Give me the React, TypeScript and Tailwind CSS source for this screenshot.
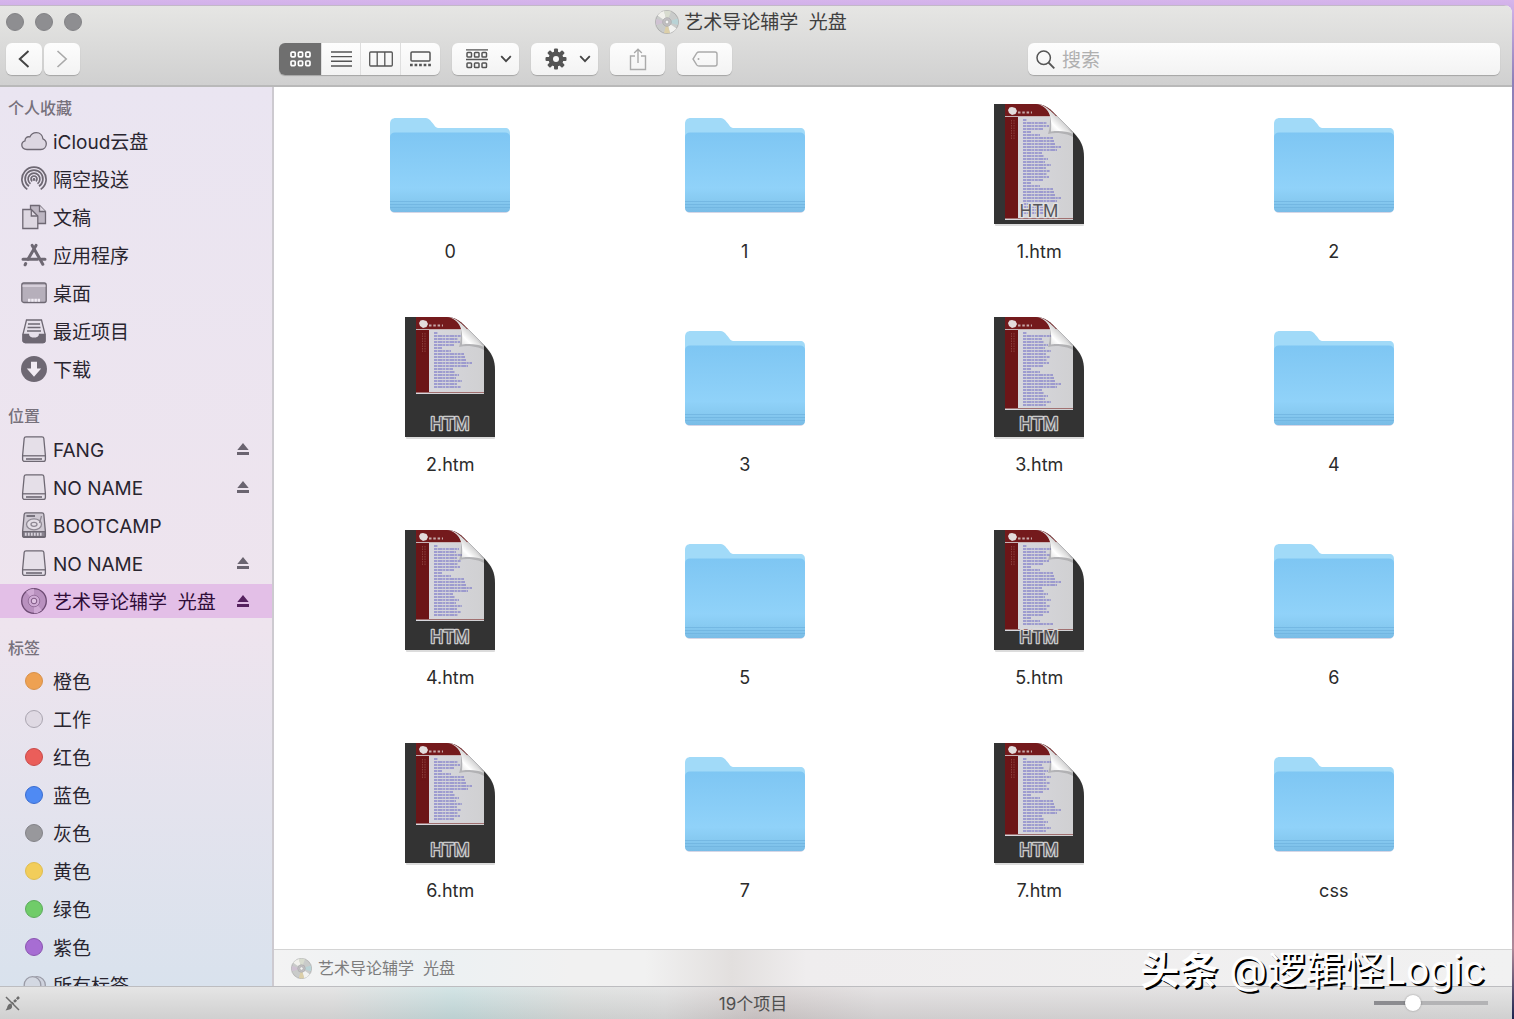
import { useState } from "react";
import type { ReactNode } from "react";
import clsx from "clsx";

type SidebarItem = { label: string; icon: ReactNode; eject?: boolean; selected?: boolean };
type FileItem = { name: string; kind: "folder" | "htm"; page?: number };

const VOLUME = "艺术导论辅学  光盘";

const files: FileItem[] = [
  { name: "0", kind: "folder" },
  { name: "1", kind: "folder" },
  { name: "1.htm", kind: "htm", page: 116 },
  { name: "2", kind: "folder" },
  { name: "2.htm", kind: "htm", page: 77 },
  { name: "3", kind: "folder" },
  { name: "3.htm", kind: "htm", page: 93 },
  { name: "4", kind: "folder" },
  { name: "4.htm", kind: "htm", page: 91 },
  { name: "5", kind: "folder" },
  { name: "5.htm", kind: "htm", page: 101 },
  { name: "6", kind: "folder" },
  { name: "6.htm", kind: "htm", page: 82 },
  { name: "7", kind: "folder" },
  { name: "7.htm", kind: "htm", page: 93 },
  { name: "css", kind: "folder" },
];

const iconProps = {
  width: 26,
  height: 26,
  viewBox: "0 0 26 26",
  fill: "none",
  stroke: "#6e6873",
  strokeWidth: 1.3,
  "aria-hidden": true,
} as const;

function CloudIcon() {
  return (
    <svg {...iconProps}>
      <path
        d="M6 21.500C2.800 21.500.8 19.600.8 17c0-2.200 1.300-3.700 3.200-4.200-.1-2.600 2.200-4.700 4.800-3.800C9.900 6.500 12.300 4.600 15.300 4.600c3.700 0 6.300 2.600 6.600 6.200 2.100.8 3.400 2.600 3.400 5 0 3.200-2.300 5.700-5.500 5.700z"
        fill="#dcd6e1"
      />
    </svg>
  );
}

function AirDropIcon() {
  return (
    <svg {...iconProps} strokeWidth={1.7}>
      <path d="M6.300 23.400A12.100 12.100 0 1 1 19.700 23.400" />
      <path d="M8 20.300A8.900 8.900 0 1 1 18 20.300" />
      <path d="M9.500 17.800A5.900 5.900 0 1 1 16.500 17.800" />
      <path d="M11.200 15.400A3 3 0 1 1 14.800 15.400" />
      <circle cx="13" cy="13.500" r="1.400" fill="#6e6873" stroke="none" />
    </svg>
  );
}

function DocumentsIcon() {
  return (
    <svg {...iconProps}>
      <path d="M9.500 1.500h9l6 6V19.500h-15z" fill="#bdb6c2" />
      <path d="M18.500 1.500v6h6" fill="#ddd7e1" />
      <path d="M1.800 5.500h8.500l6.500 6.500v12.500h-15z" fill="#ddd7e1" />
      <path d="M10.300 5.500v6.500h6.500" />
    </svg>
  );
}

function AppsIcon() {
  return (
    <svg {...iconProps} strokeLinecap="round" strokeWidth={3}>
      <path d="M11.200 3.400 21.800 22.300M15 3.400 7 17.300M4.700 21.500l-.6 1.300" />
      <path d="M2 17.300h14.500M20.500 17.300H24" />
    </svg>
  );
}

function DesktopIcon() {
  return (
    <svg {...iconProps}>
      <rect x=".8" y="3" width="24.400" height="19.500" rx="2" fill="#b6afbb" />
      <path d="M1.500 6h23" stroke="#e0dae4" strokeWidth="1.500" />
      <path d="M7 20.300h12" stroke="#f1ecf4" strokeWidth="3" strokeDasharray="2.500 .7" />
    </svg>
  );
}

function RecentsIcon() {
  return (
    <svg {...iconProps}>
      <path d="M5.500 2h15l3.500 14v6.500a2 2 0 0 1-2 2H4a2 2 0 0 1-2-2V16z" fill="#e6e0ea" />
      <path d="M2 16.500h5.500c.5 5 10.500 5 11 0H24v6a2 2 0 0 1-2 2H4a2 2 0 0 1-2-2z" fill="#6e6873" />
      <path d="M7 6h12M6.500 9.500h13M6 13h14" />
    </svg>
  );
}

function DownloadsIcon() {
  return (
    <svg {...iconProps} stroke="none">
      <circle cx="13" cy="13" r="13" fill="#6e6873" />
      <path d="M10 5.800h6v6.700h4.200L13 20.700l-7.200-8.200H10z" fill="#f1ebf3" />
    </svg>
  );
}

function DriveIcon() {
  return (
    <svg {...iconProps}>
      <path
        d="M5 .8h16c1 0 1.700.6 1.800 1.500L24.400 19.500v4a2 2 0 0 1-2 2H3.600a2 2 0 0 1-2-2v-4L3.200 2.300C3.300 1.400 4 .8 5 .8z"
        fill="#e5dfe8"
      />
      <path d="M1.800 19.800h22.400" />
      <path d="M5 23h16" strokeWidth="1.600" />
    </svg>
  );
}

function HardDiskIcon() {
  return (
    <svg {...iconProps}>
      <path
        d="M5 .8h16c1 0 1.700.6 1.800 1.500L24.400 19.500v4a2 2 0 0 1-2 2H3.600a2 2 0 0 1-2-2v-4L3.200 2.300C3.300 1.400 4 .8 5 .8z"
        fill="#cfc9d3"
      />
      <path d="M2 19.600h22.200v5H2z" fill="#8a8490" />
      <path d="M4 22.200h18" stroke="#d8d2dc" strokeWidth="3" strokeDasharray="1.600 1.400" />
      <path d="M5.500 4h8.500" strokeWidth="1.800" />
      <ellipse cx="13" cy="12.300" rx="7.500" ry="5.500" stroke="#8e8893" fill="#e3dee6" />
      <ellipse cx="13" cy="12.300" rx="3" ry="2" stroke="#8e8893" />
      <path d="m20.500 4-2 7" stroke="#8e8893" />
    </svg>
  );
}

function SideDiscIcon() {
  return (
    <svg {...iconProps} stroke="#6c4a72">
      <circle cx="13" cy="13" r="12.300" fill="#b991bf" />
      <path d="M13 13 5 3.800A12 12 0 0 1 13 .8zM13 13l8 9.200a12 12 0 0 1-8 3z" fill="#cfa9d4" stroke="none" />
      <circle cx="13" cy="13" r="5.800" fill="#d0acd5" stroke="#916b97" strokeWidth=".9" />
      <circle cx="13" cy="13" r="2.800" fill="#dfc2e2" stroke="#7d5783" strokeWidth="1" />
    </svg>
  );
}

function TagDot({ className }: { className: string }) {
  return <span className={clsx("mx-1 block size-[18px] rounded-full border", className)} />;
}

function AllTagsIcon() {
  return (
    <svg {...iconProps} stroke="#9a9ba6">
      <circle cx="16" cy="13" r="8.300" fill="#cfd3de" />
      <circle cx="11.500" cy="13" r="8.300" fill="#d3d8e2" />
    </svg>
  );
}

const sections: { title: string; items: SidebarItem[] }[] = [
  {
    title: "个人收藏",
    items: [
      { label: "iCloud云盘", icon: <CloudIcon /> },
      { label: "隔空投送", icon: <AirDropIcon /> },
      { label: "文稿", icon: <DocumentsIcon /> },
      { label: "应用程序", icon: <AppsIcon /> },
      { label: "桌面", icon: <DesktopIcon /> },
      { label: "最近项目", icon: <RecentsIcon /> },
      { label: "下载", icon: <DownloadsIcon /> },
    ],
  },
  {
    title: "位置",
    items: [
      { label: "FANG", icon: <DriveIcon />, eject: true },
      { label: "NO NAME", icon: <DriveIcon />, eject: true },
      { label: "BOOTCAMP", icon: <HardDiskIcon /> },
      { label: "NO NAME", icon: <DriveIcon />, eject: true },
      { label: VOLUME, icon: <SideDiscIcon />, eject: true, selected: true },
    ],
  },
  {
    title: "标签",
    items: [
      { label: "橙色", icon: <TagDot className="border-[#d8914a] bg-[#eea152]" /> },
      { label: "工作", icon: <TagDot className="border-[#aaa5b0] bg-[#dfd9e3]" /> },
      { label: "红色", icon: <TagDot className="border-[#c94a4a] bg-[#ea5e5a]" /> },
      { label: "蓝色", icon: <TagDot className="border-[#3a6cd0] bg-[#4f8af3]" /> },
      { label: "灰色", icon: <TagDot className="border-[#838388] bg-[#98989c]" /> },
      { label: "黄色", icon: <TagDot className="border-[#dfbd50] bg-[#f2cd5a]" /> },
      { label: "绿色", icon: <TagDot className="border-[#5cab5c] bg-[#70cc69]" /> },
      { label: "紫色", icon: <TagDot className="border-[#8a55b0] bg-[#a76dd3]" /> },
      { label: "所有标签", icon: <AllTagsIcon /> },
    ],
  },
];

function DiscIcon({ size }: { size: number }) {
  return (
    <svg width={size} height={size} viewBox="0 0 24 24" aria-hidden="true">
      <circle cx="12" cy="12" r="11.500" fill="#c9cbca" stroke="#a5a5a5" strokeWidth=".8" />
      <path d="M12 12 2.500 5.500A11.300 11.300 0 0 1 9 1.100z" fill="#f1f1ec" />
      <path d="M12 12 9 1.100A11.300 11.300 0 0 1 16 1.400z" fill="#d8dccf" />
      <path d="M12 12 22.600 8.500A11.300 11.300 0 0 1 22.800 15z" fill="#b9d3d6" />
      <path d="m12 12 9.500 6.500a11.300 11.300 0 0 1-6.500 4.400z" fill="#f2f2f0" />
      <path d="m12 12 3 10.900a11.300 11.300 0 0 1-6 0z" fill="#dccfa8" />
      <path d="M12 12 1.200 15a11.300 11.300 0 0 1 .1-6z" fill="#cfc2d2" />
      <circle cx="12" cy="12" r="4.300" fill="#c2c0c3" stroke="#a6a6a8" strokeWidth=".7" />
      <circle cx="12" cy="12" r="1.900" fill="#f4f4f4" stroke="#9b9b9b" strokeWidth=".6" />
    </svg>
  );
}

function FolderIcon() {
  return (
    <svg width="120" height="120" viewBox="0 0 120 120" aria-hidden="true">
      <defs>
        <linearGradient id="folder-front" x1="0" y1="0" x2="0" y2="1">
          <stop offset="0" stopColor="#7ec6f3" />
          <stop offset=".7" stopColor="#90d2f9" />
          <stop offset=".85" stopColor="#87caf1" />
          <stop offset="1" stopColor="#79bce6" />
        </linearGradient>
      </defs>
      <rect x="1" y="60" width="118" height="49" rx="4" fill="#d5d6e6" />
      <path
        d="M0 20c0-4 2-6 6-6h28c5 0 6 2 8.500 5s3 5 7 5H115c3.500 0 5 2 5 5v30H0z"
        fill="#a1daf8"
      />
      <path d="M0 33c0-3 2-4.500 5-4.500h110c3 0 5 1.500 5 4.500v71c0 2.500-1.500 4-4 4H4c-2.500 0-4-1.500-4-4z" fill="url(#folder-front)" />
      <path d="M0 97.500h120M0 100.500h120M0 103.500h120" stroke="#6eb2de" strokeWidth="1" opacity=".7" />
    </svg>
  );
}

// Link lengths on the thumbnail page, cycled with a different start per file.
const linkWidths = [8, 19, 24, 32, 28, 17, 21, 26, 38, 23, 30, 25, 20, 34, 27, 31, 22];

function HtmIcon({ page, id }: { page: number; id: string }) {
  const rows = Math.floor((page - 18) / 3);
  const clip = `sheet-${id}`;
  return (
    <svg width="120" height="120" viewBox="0 0 120 120" overflow="visible" aria-hidden="true">
      <defs>
        <clipPath id={clip}>
          <path d="M15 0h42c9 0 14 5 22 13l15 15c8 8 11 15 11 25v67H15z" />
        </clipPath>
        <linearGradient id={`${clip}-page`} x1="0" y1="0" x2="1" y2="0">
          <stop offset="0" stopColor="#d9d9e0" />
          <stop offset="1" stopColor="#d0d0d2" />
        </linearGradient>
        <linearGradient id={`${clip}-curl`} gradientUnits="userSpaceOnUse" x1="72" y1="28" x2="83" y2="17">
          <stop offset="0" stopColor="#e4e4e4" />
          <stop offset=".45" stopColor="#ffffff" />
          <stop offset="1" stopColor="#d2d2d2" />
        </linearGradient>
      </defs>
      <rect x="16" y="60" width="89" height="62" rx="1" fill="#dcdcdc" />
      <g clipPath={`url(#${clip})`}>
        <rect x="15" width="90" height="120" fill="#333333" />
        <rect x="26" width="68" height={page} fill={`url(#${clip}-page)`} />
        <rect x="26" width="68" height="12" fill="#741a1c" />
        <rect x="26" y="12" width="68" height="1" fill="#c8b4b6" />
        <rect x="26" y="13" width="13" height={page - 14} fill="#6c1517" />
        <rect x="26" y={page - 2} width="68" height="1" fill="#a07070" />
        <path d="m33 3 3.500 1 1.500 3-1.500 3-3.500 1-3-2-1-3 1.500-2.500z" fill="#e3dddd" />
        <path d="M39 8.500h14" stroke="#c7a9a9" strokeWidth="1.800" strokeDasharray="2.500 1.800" />
        <path d="M32.500 16v20M35 16v20" stroke="#a2605a" strokeWidth=".8" strokeDasharray="1.500 1" opacity=".7" />
        {Array.from({ length: rows }, (_, i) => (
          <path
            key={i}
            d={`M44 ${16 + i * 3}h${i === 0 ? 4 : linkWidths[(i * 5 + page) % linkWidths.length]}`}
            stroke="#7a77c9"
            strokeWidth="1.400"
            strokeDasharray="3 .6 5 .5 2 .7"
            opacity=".8"
          />
        ))}
        <path d="M71 12c0 8 0 12-2 18 9-2 20-1 30 6l-5-8z" fill="#000" opacity=".15" />
      </g>
      <path d="M59 0c6 1 11 5 16 10l19 20c-6-3-14-3.500-22-2.500 1-12 0-23-13-27.500z" fill={`url(#${clip}-curl)`} />
      <text
        x="60"
        y="113"
        textAnchor="middle"
        className="font-['Inter'] text-[17px]"
        fill="#55555a"
        stroke="#e6e6e6"
        strokeOpacity=".85"
        strokeWidth="2.600"
        strokeLinejoin="round"
        paintOrder="stroke"
      >
        HTM
      </text>
    </svg>
  );
}

function EjectIcon() {
  return (
    <svg width="12" height="12" viewBox="0 0 12 12" fill="currentColor" aria-hidden="true">
      <path d="M6 0 11.700 7H.3zM0 9h12v3H0z" />
    </svg>
  );
}

function ChevronDown() {
  return (
    <svg width="12" height="8" viewBox="0 0 12 8" fill="none" stroke="#444" strokeWidth="1.800" aria-hidden="true">
      <path d="m1.200 1.200 4.800 5 4.800-5" />
    </svg>
  );
}

const viewIcons: { name: string; width: string; icon: ReactNode }[] = [
  {
    name: "图标",
    width: "w-[43px]",
    icon: (
      <svg width="21" height="16" viewBox="0 0 21 16" fill="none" stroke="currentColor" strokeWidth="1.700">
        {[1, 8.4, 15.8].map((x) => (
          <g key={x}>
            <rect x={x} y="1.200" width="4.200" height="4.600" rx="1" />
            <rect x={x} y="10" width="4.200" height="4.600" rx="1" />
          </g>
        ))}
      </svg>
    ),
  },
  {
    name: "列表",
    width: "w-[39px]",
    icon: (
      <svg width="21" height="16" viewBox="0 0 21 16" stroke="currentColor" strokeWidth="1.400">
        <path d="M0 1h21M0 5.600h21M0 10.300h21M0 15h21" />
      </svg>
    ),
  },
  {
    name: "分栏",
    width: "w-10",
    icon: (
      <svg width="24" height="16" viewBox="0 0 24 16" fill="none" stroke="currentColor" strokeWidth="1.300">
        <rect x=".7" y="1" width="22.600" height="14" rx="1" />
        <path d="M8.200 1v14M15.800 1v14" />
      </svg>
    ),
  },
  {
    name: "画廊",
    width: "w-[39px]",
    icon: (
      <svg width="21" height="16" viewBox="0 0 21 16" fill="none" stroke="currentColor" strokeWidth="1.500">
        <rect x="1" y="1" width="19" height="9" rx="1" />
        <path d="M0 14h21" strokeWidth="2.500" strokeDasharray="2.700 1.850" />
      </svg>
    ),
  },
];

const toolButton =
  "flex h-8 items-center justify-center rounded-md bg-linear-to-b from-[#fdfdfd] to-[#f3f3f3] shadow-[0_1px_1px_rgba(0,0,0,0.22)]";

function TitleBar() {
  return (
    <div className="grid h-8 grid-cols-[1fr_auto_1fr] items-center pl-1.5 pr-4">
      <div className="flex gap-[11px]">
        {["关闭", "最小化", "缩放"].map((label) => (
          <button key={label} aria-label={label} className="size-[18px] rounded-full border border-[#838386] bg-[#8e8e91]" />
        ))}
      </div>
      <h1 className="flex items-center gap-[5px] whitespace-pre text-[19px] leading-6 text-[#3f3f3f]">
        <DiscIcon size={24} />
        <span className="pt-0.5">{VOLUME}</span>
      </h1>
    </div>
  );
}

function Toolbar() {
  const [view, setView] = useState("图标");

  return (
    <div className="flex pt-[5px] pr-3">
      <div className="flex w-[279px] shrink-0 gap-0.5 pl-1.5">
        <button aria-label="后退" className={clsx(toolButton, "w-9")}>
          <svg width="12" height="18" viewBox="0 0 12 18" fill="none" stroke="#444" strokeWidth="2">
            <path d="M10.500 1 1.800 9l8.700 8" />
          </svg>
        </button>
        <button aria-label="前进" className={clsx(toolButton, "w-9")}>
          <svg width="12" height="18" viewBox="0 0 12 18" fill="none" stroke="#a9a9a9" strokeWidth="1.600">
            <path d="m1.500 1 8.700 8-8.700 8" />
          </svg>
        </button>
      </div>
      <div className="flex shrink-0 gap-3">
        <div className="flex overflow-hidden rounded-md shadow-[0_1px_1px_rgba(0,0,0,0.22)]">
          {viewIcons.map((v) => (
            <button
              key={v.name}
              aria-label={v.name}
              aria-pressed={view === v.name}
              onClick={() => setView(v.name)}
              className={clsx(
                "flex h-8 items-center justify-center border-r border-[#dedede] last:border-r-0",
                v.width,
                view === v.name ? "bg-[#6f6f6f] text-white" : "bg-linear-to-b from-[#fdfdfd] to-[#f3f3f3] text-[#555]"
              )}
            >
              {v.icon}
            </button>
          ))}
        </div>
        <button aria-label="分组" aria-haspopup="menu" className={clsx(toolButton, "w-[67px] gap-3 pl-1.5")}>
          <svg width="22" height="20" viewBox="0 0 22 20" fill="none" stroke="#555" strokeWidth="1.500">
            <path d="M0 .8h22M0 10.500h22" strokeWidth="1.300" />
            {[1, 8.5, 16].map((x) => (
              <g key={x}>
                <rect x={x} y="3.500" width="4.500" height="4.500" rx=".8" />
                <rect x={x} y="14" width="4.500" height="4.500" rx=".8" />
              </g>
            ))}
          </svg>
          <ChevronDown />
        </button>
        <button aria-label="操作" aria-haspopup="menu" className={clsx(toolButton, "w-[67px] gap-3 pl-1.5")}>
          <svg width="22" height="22" viewBox="-11 -11 22 22" fill="#555">
            {[0, 45, 90, 135].map((a) => (
              <rect key={a} x="-2" y="-10.500" width="4" height="21" rx="1" transform={`rotate(${a})`} />
            ))}
            <circle r="7.500" />
            <circle r="3" fill="#f8f8f8" />
          </svg>
          <ChevronDown />
        </button>
        <button aria-label="共享" className={clsx(toolButton, "w-[55px]")}>
          <svg width="18" height="23" viewBox="0 0 18 23" fill="none" stroke="#aaa" strokeWidth="1.400">
            <path d="M6 8H1.500v13.500h15V8H12M9 15V1.500M5.200 5 9 1.300 12.800 5" />
          </svg>
        </button>
        <button aria-label="标签" className={clsx(toolButton, "w-[55px]")}>
          <svg width="26" height="16" viewBox="0 0 26 16" fill="none" stroke="#aaa" strokeWidth="1.400">
            <path d="M7 1h16a2 2 0 0 1 2 2v10a2 2 0 0 1-2 2H7c-1 0-1.700-.4-2.300-1.200L1 8l3.700-5.800C5.300 1.400 6 1 7 1z" />
            <circle cx="6.500" cy="8" r="1" fill="#aaa" stroke="none" />
          </svg>
        </button>
      </div>
      <label className={clsx(toolButton, "ml-auto w-[472px] gap-[7px] px-2")}>
        <svg width="19" height="19" viewBox="0 0 19 19" fill="none" stroke="#555" strokeWidth="1.500" aria-hidden="true">
          <circle cx="7.700" cy="7.700" r="6.700" />
          <path d="m12.500 12.500 5.800 5.800" strokeWidth="1.800" />
        </svg>
        <input
          type="search"
          aria-label="搜索"
          placeholder="搜索"
          className="h-8 min-w-0 flex-1 bg-transparent pt-0.5 text-[19px] leading-[30px] outline-none placeholder:text-[#b0b0b0]"
        />
      </label>
    </div>
  );
}

function Sidebar() {
  return (
    <nav className="flex w-[274px] shrink-0 flex-col gap-2.5 overflow-hidden border-r-2 border-[#cdcad0] bg-linear-to-b from-[#eae5f1] via-[#eee4ee] via-60% to-[#d9e2ed] pt-px">
      {sections.map((section) => (
        <section key={section.title} className="shrink-0">
          <h2 className="flex h-9 items-center pl-2 pt-1 text-base font-medium text-[#77717c]">{section.title}</h2>
          <ul className="flex flex-col gap-1">
            {section.items.map((item, i) => (
              <li
                key={i}
                className={clsx("flex h-[34px] items-center pl-[21px] pr-[23px]", item.selected && "bg-[#e3bfe7]")}
              >
                <a
                  href="#"
                  className={clsx(
                    "flex flex-1 items-center gap-1.5 whitespace-pre text-[19px] leading-6",
                    item.selected ? "text-[#2f0d38]" : "text-[#29252f]"
                  )}
                >
                  {item.icon}
                  <span className="pt-[3px]">{item.label}</span>
                </a>
                {item.eject && (
                  <button aria-label={`推出 ${item.label}`} className={item.selected ? "text-[#56215f]" : "text-[#6a6470]"}>
                    <EjectIcon />
                  </button>
                )}
              </li>
            ))}
          </ul>
        </section>
      ))}
    </nav>
  );
}

function FileGrid() {
  return (
    <main className="grid min-h-0 flex-1 auto-rows-[213px] grid-cols-4 overflow-hidden bg-white pl-[29px] pr-[31px] pt-[17px]">
      {files.map((file) => (
        <button key={file.name} className="flex flex-col items-center gap-4 self-start justify-self-center">
          {file.kind === "folder" ? <FolderIcon /> : <HtmIcon page={file.page ?? 90} id={file.name.replace(".", "-")} />}
          <span className="text-[18px] leading-6 text-[#2b2b2b]">{file.name}</span>
        </button>
      ))}
    </main>
  );
}

function PathBar() {
  return (
    <div className="flex h-[37px] shrink-0 items-center gap-1.5 whitespace-pre border-t border-[#d4d4d4] bg-[linear-gradient(90deg,#f3f3f3_0%,#ecf1f3_13%,#f1f1f1_24%,#f1f1f1_30%,#e2dfde_37%,#efedee_43%,#f1f1f1_100%)] pl-[17px] text-base text-[#7c7c7c]">
      <DiscIcon size={21} />
      {VOLUME}
    </div>
  );
}

function StatusBar() {
  return (
    <footer className="grid h-[33px] shrink-0 grid-cols-[1fr_auto_1fr] items-center border-t border-[#bdbdc0] bg-[linear-gradient(180deg,rgba(255,255,255,0.25),rgba(120,120,120,0.12)),linear-gradient(90deg,#dcdcdc_0%,#dcdcdc_22%,#c5dcdd_30%,#d8dbda_38%,#dcdcdc_44%,#cfc8c8_50%,#dcd9da_58%,#dcdcdc_100%)] pl-1 pr-2.5">
      <svg width="17" height="17" viewBox="0 0 17 17" fill="none" stroke="#6c6c6c" aria-hidden="true">
        <path d="M2 2l13 13" strokeWidth="1.500" />
        <path d="M15 2 8.500 8.500" strokeWidth="2.600" strokeDasharray="3 1" />
        <path d="M7.500 8.500c-3 0-4 2-4.500 4.500L1.500 15.500l4-1c2-.5 3-2 2.500-4z" fill="#6c6c6c" stroke="none" />
      </svg>
      <p className="pt-0.5 text-[17px] leading-6 text-[#4f4f4f]">19个项目</p>
      <input
        type="range"
        aria-label="图标大小"
        defaultValue={32}
        className="mr-3.5 h-4 w-[114px] appearance-none justify-self-end bg-[linear-gradient(90deg,#8c8c90_34%,#b3b3b5_34%)] bg-size-[100%_4px] bg-center bg-no-repeat [&::-webkit-slider-thumb]:size-4 [&::-webkit-slider-thumb]:appearance-none [&::-webkit-slider-thumb]:rounded-full [&::-webkit-slider-thumb]:bg-white [&::-webkit-slider-thumb]:shadow-[0_0_2px_rgba(0,0,0,0.35)]"
      />
    </footer>
  );
}

export default function App() {
  return (
    <div className="h-screen bg-[linear-gradient(180deg,#d6b5ec_0%,#8d7fb8_8%,#a99bc4_50%,#3a3f6e_75%,#b08a9a_93%,#1c2350_100%)] pr-0.5 pt-[5px] font-['Inter','Noto_Sans_CJK_SC',sans-serif]">
      <div className="relative flex h-full flex-col overflow-hidden rounded-tr-lg bg-white">
        <header className="h-[82px] shrink-0 border-b-2 border-[#b9b9b9] border-t border-t-[#c3b9c8] bg-linear-to-b from-[#e6e6e4] to-[#d0d0d0]">
          <TitleBar />
          <Toolbar />
        </header>
        <div className="flex min-h-0 flex-1">
          <Sidebar />
          <div className="flex min-w-0 flex-1 flex-col">
            <FileGrid />
            <PathBar />
          </div>
        </div>
        <StatusBar />
        <p className="pointer-events-none absolute bottom-[21px] right-[27px] text-[39px] leading-[56px] text-white [text-shadow:2px_2px_0_#000]">
          <span className="font-bold">头条</span> @逻辑怪Logic
        </p>
      </div>
    </div>
  );
}
